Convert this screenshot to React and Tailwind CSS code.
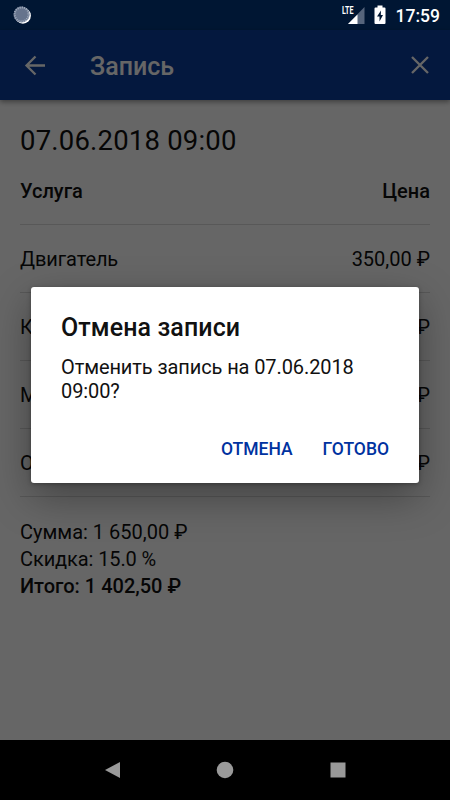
const rows = [
  { name: 'Двигатель', price: '350,00 ₽' },
  { name: 'К', price: '₽' },
  { name: 'М', price: '₽' },
  { name: 'О', price: '₽' },
]

function StatusBar() {
  return (
    <div className="relative z-20 h-[30px] flex items-center justify-between pl-[13px] pr-[10px]">
      <svg width="18" height="18" viewBox="0 0 18 18">
        <circle cx="9.900" cy="9.700" r="8" fill="#fff" />
        <circle cx="8.600" cy="8.400" r="8" fill="#66748d" />
        <circle cx="8.600" cy="8.400" r="7" fill="none" stroke="#a9b3c3" strokeWidth="2" strokeDasharray="1 1.2" />
      </svg>
      <div className="flex items-center">
        <svg className="mr-[9px]" width="24" height="20" viewBox="0 0 24 20">
          <path d="M23.500 2v17H7z" fill="#56657c" />
          <path d="M16.500 9.500v9.500H7z" fill="#fff" />
          <text x="1" y="9" fill="#fff" fontSize="10" fontWeight="700" textLength="11.5" lengthAdjust="spacingAndGlyphs">LTE</text>
        </svg>
        <svg className="mr-[10px]" width="12" height="20" viewBox="0 0 12 20">
          <path d="M3.500 0.500h5v2h2q1 0 1 1v14.500q0 1-1 1h-9q-1 0-1-1v-14.500q0-1 1-1h2z" fill="#fff" />
          <path d="M7 5.500L3 11.500h2.500v5L9 10H6.800z" fill="#001733" />
        </svg>
        <span className="text-[17.5px] font-medium text-white leading-[30px] relative top-px">17:59</span>
      </div>
    </div>
  )
}

function Header() {
  return (
    <div className="h-[70px] bg-[#0c3c9c] flex items-center px-5 shadow-[0_2px_5px_rgba(0,0,0,0.4)] text-white">
      <svg className="ml-1 mt-px" width="22" height="22" viewBox="0 0 22 22" fill="none" stroke="currentColor" strokeWidth="2.3">
        <path d="M11.500 1.500L2.500 10.500L11.500 19.500M2.500 10.500H21" />
      </svg>
      <h1 className="ml-[44px] mt-[3px] text-[25px] font-medium leading-[30px]">Запись</h1>
      <svg className="ml-auto mr-[1px]" width="18" height="18" viewBox="0 0 18 18" fill="none" stroke="currentColor" strokeWidth="2.3">
        <path d="M1 1L17 17M17 1L1 17" />
      </svg>
    </div>
  )
}

function Dialog() {
  return (
    <div className="absolute z-30 left-[31px] top-[287px] w-[388px] h-[196px] bg-white rounded-[3px] shadow-[0_14px_40px_rgba(0,0,0,0.35),0_1px_4px_rgba(0,0,0,0.3)] px-[30px] pt-[26px] flex flex-col">
      <h2 className="text-[25px] font-medium leading-[30px] tracking-[0.1px] text-[#111]">Отмена записи</h2>
      <p className="mt-3 text-[20px] leading-6 tracking-[-0.1px] text-[#111]">Отменить запись на 07.06.2018 09:00?</p>
      <div className="mt-[31px] flex justify-end gap-[30px] text-[17.5px] font-medium leading-[30px] text-[#0032a0]">
        <button>ОТМЕНА</button>
        <button>ГОТОВО</button>
      </div>
    </div>
  )
}

function NavBar() {
  return (
    <div className="relative z-20 h-[60px] bg-black flex items-center justify-around px-14">
      <svg width="17" height="18" viewBox="0 0 17 18"><path d="M16 1v16L1 9z" fill="#999" /></svg>
      <svg width="18" height="18" viewBox="0 0 18 18"><circle cx="9" cy="9" r="8.300" fill="#999" /></svg>
      <svg width="16" height="16" viewBox="0 0 16 16"><rect x="0.500" y="0.500" width="15" height="15" fill="#999" /></svg>
    </div>
  )
}

export default function App() {
  return (
    <div className="relative w-[450px] h-[800px] bg-[#00397f] flex flex-col overflow-hidden font-['Roboto',sans-serif]">
      <StatusBar />
      <div className="flex-1 bg-white flex flex-col">
        <Header />
        <main className="px-5 pt-[23px] text-[20px] text-[#111]">
          <div className="text-[27.5px] leading-[35px] tracking-[0.2px]">07.06.2018 09:00</div>
          <div className="h-[67px] flex items-center justify-between border-b border-[#ddd] font-medium">
            <span>Услуга</span>
            <span>Цена</span>
          </div>
          {rows.map((row) => (
            <div key={row.name} className="h-[68px] pt-px flex items-center justify-between border-b border-[#ddd]">
              <span className="tracking-[-0.1px]">{row.name}</span>
              <span>{row.price}</span>
            </div>
          ))}
          <div className="mt-[22px] leading-[27px]">
            <p>Сумма: 1 650,00 ₽</p>
            <p className="tracking-[-0.1px]">Скидка: 15.0 %</p>
            <p className="font-medium">Итого: 1 402,50 ₽</p>
          </div>
        </main>
      </div>
      <NavBar />
      <div className="absolute inset-0 z-10 bg-black/60" />
      <Dialog />
    </div>
  )
}
